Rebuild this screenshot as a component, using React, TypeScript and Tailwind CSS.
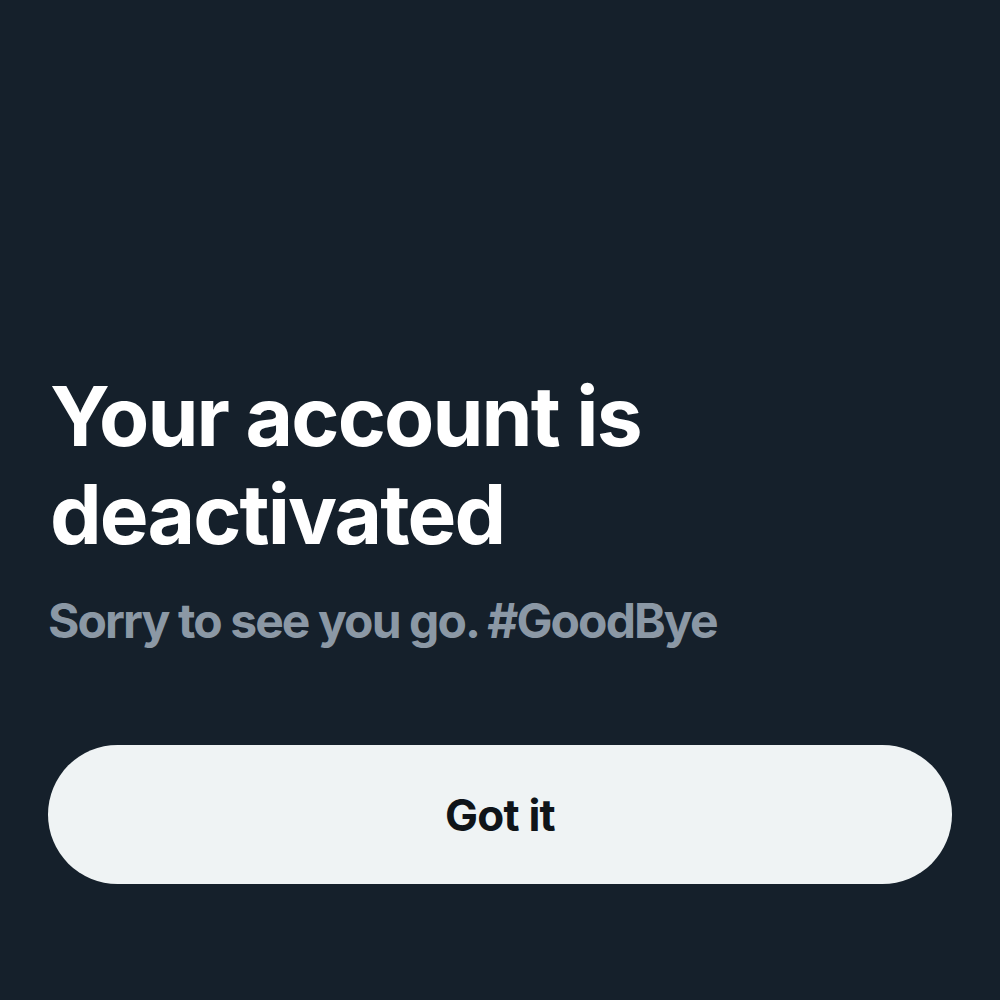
export default function App() {
  return (
    <div
      className="w-[1000px] h-[1000px] bg-[#15202b] flex flex-col px-[48px] pt-[368px]"
      style={{ fontFamily: "Inter, 'Liberation Sans', sans-serif" }}
    >
      <h1 className="text-[82px] leading-[98px] font-bold text-white tracking-[-1.9px] pl-[2px]">
        Your account is
        <br />
        deactivated
      </h1>
      <p className="mt-[27px] text-[48px] leading-[60px] font-bold text-[#8b98a5] tracking-[-1.9px]">
        Sorry to see you go. #GoodBye
      </p>
      <button className="mt-[94px] w-[904px] h-[139px] rounded-[70px] bg-[#eff3f4] text-[#0f1419] text-[44px] font-bold tracking-[-0.8px]">
        Got it
      </button>
    </div>
  );
}
